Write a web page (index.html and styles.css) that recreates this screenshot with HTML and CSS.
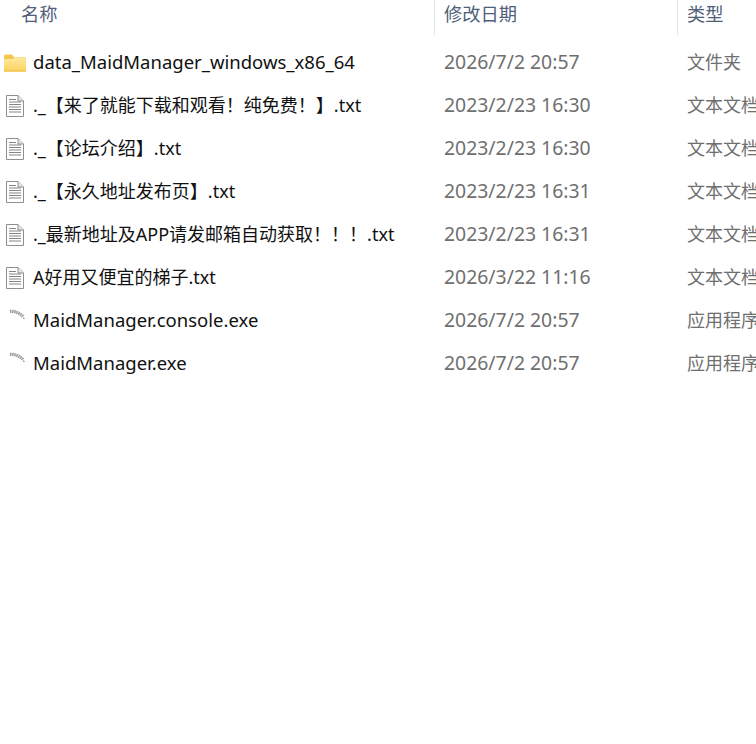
FILE: index.html
```html
<!DOCTYPE html>
<html lang="zh">
<head>
<meta charset="utf-8">
<title>文件列表</title>
<link rel="stylesheet" href="styles.css">
</head>
<body>
<svg class="sprites" width="0" height="0" aria-hidden="true">
  <defs>
    <linearGradient id="folderFill" x1="0" y1="0" x2="0" y2="1">
      <stop offset="0" stop-color="#fee9a0"/>
      <stop offset="1" stop-color="#fbd35f"/>
    </linearGradient>
    <symbol id="folder" viewBox="0 0 22 18">
      <path d="M0 2Q0 0.500 1.500 0.500H8L10 3H22V17H0Z" fill="#f3c650"/>
      <path d="M0 5H9L10.500 3.200H22V17.500H0Z" fill="url(#folderFill)"/>
      <path d="M0 17H22" stroke="#eeb93f" stroke-width="1"/>
    </symbol>
    <symbol id="doc" viewBox="0 0 18 22">
      <path d="M0.500 0.500H12L17.500 6V21.500H0.500Z" fill="#fff" stroke="#8e8e8e"/>
      <path d="M12 0.500V6H17.500" fill="#e8e8e8" stroke="#8e8e8e"/>
      <path d="M3 4.500H10M3 7H15M3 9.500H15M3 12H15M3 14.500H15M3 17H15" stroke="#858585" stroke-width="1.200"/>
    </symbol>
    <symbol id="exe" viewBox="0 0 18 14">
      <path d="M2 2.500Q9.500 1.800 15 7.500" fill="none" stroke="#d2d2d2" stroke-width="3.200"/>
      <path d="M2 2.500Q9.500 1.800 15 7.500" fill="none" stroke="#999" stroke-width="3.200" stroke-dasharray="1 1.200"/>
      <path d="M15.200 8.800L16.400 9.800" stroke="#8d8d8d" stroke-width="1.200"/>
    </symbol>
  </defs>
</svg>

<div class="list">
  <div class="head">
    <div class="hcell name-col">名称</div>
    <div class="hcell date-col">修改日期</div>
    <div class="hcell type-col">类型</div>
  </div>

  <div class="row">
    <div class="name-col name"><svg class="icon folder"><use href="#folder"/></svg><span class="latin">data_MaidManager_windows_x86_64</span></div>
    <div class="date-col meta date">2026/7/2 20:57</div>
    <div class="type-col meta">文件夹</div>
  </div>
  <div class="row">
    <div class="name-col name"><svg class="icon doc"><use href="#doc"/></svg><span>._【来了就能下载和观看！纯免费！】.txt</span></div>
    <div class="date-col meta date">2023/2/23 16:30</div>
    <div class="type-col meta">文本文档</div>
  </div>
  <div class="row">
    <div class="name-col name"><svg class="icon doc"><use href="#doc"/></svg><span>._【论坛介绍】.txt</span></div>
    <div class="date-col meta date">2023/2/23 16:30</div>
    <div class="type-col meta">文本文档</div>
  </div>
  <div class="row">
    <div class="name-col name"><svg class="icon doc"><use href="#doc"/></svg><span>._【永久地址发布页】.txt</span></div>
    <div class="date-col meta date">2023/2/23 16:31</div>
    <div class="type-col meta">文本文档</div>
  </div>
  <div class="row">
    <div class="name-col name"><svg class="icon doc"><use href="#doc"/></svg><span>._最新地址及APP请发邮箱自动获取！！！.txt</span></div>
    <div class="date-col meta date">2023/2/23 16:31</div>
    <div class="type-col meta">文本文档</div>
  </div>
  <div class="row">
    <div class="name-col name"><svg class="icon doc"><use href="#doc"/></svg><span>A好用又便宜的梯子.txt</span></div>
    <div class="date-col meta date">2026/3/22 11:16</div>
    <div class="type-col meta">文本文档</div>
  </div>
  <div class="row">
    <div class="name-col name"><svg class="icon exe"><use href="#exe"/></svg><span class="latin">MaidManager.console.exe</span></div>
    <div class="date-col meta date">2026/7/2 20:57</div>
    <div class="type-col meta">应用程序</div>
  </div>
  <div class="row">
    <div class="name-col name"><svg class="icon exe"><use href="#exe"/></svg><span class="latin">MaidManager.exe</span></div>
    <div class="date-col meta date">2026/7/2 20:57</div>
    <div class="type-col meta">应用程序</div>
  </div>
</div>
</body>
</html>
```
FILE: styles.css
```css
html, body {
  margin: 0;
  padding: 0;
  background: #fff;
}
body {
  width: 756px;
  height: 744px;
  overflow: hidden;
  font-family: "Noto Sans", "Noto Sans CJK SC", sans-serif;
  font-size: 18px;
}
.sprites {
  display: block;
}
.list {
  display: flex;
  flex-direction: column;
}
.head {
  display: grid;
  grid-template-columns: 434px 243px 79px;
  height: 35px;
  margin-bottom: 6px;
}
.row {
  display: grid;
  grid-template-columns: 434px 243px 79px;
  height: 43px;
  align-items: center;
}
.hcell {
  color: #4f6078;
  font-size: 18.25px;
  line-height: 27px;
  white-space: nowrap;
}
.head .name-col {
  padding-left: 21px;
}
.head .date-col,
.head .type-col {
  border-left: 1px solid #e5e5e5;
  padding-left: 9px;
  height: 35px;
}
.name {
  display: flex;
  align-items: center;
  white-space: nowrap;
  color: #111;
  line-height: 26px;
}
.name span {
  padding-bottom: 2px;
}
.name .latin {
  font-size: 18.5px;
}
.icon {
  flex: none;
}
.folder {
  width: 22px;
  height: 18px;
  margin-left: 4px;
  margin-right: 7px;
}
.doc {
  width: 18px;
  height: 22px;
  margin-left: 6px;
  margin-right: 9px;
}
.exe {
  width: 18px;
  height: 14px;
  margin-left: 8px;
  margin-right: 7px;
  align-self: flex-start;
  margin-top: 2px;
}
.meta {
  color: #6f6f6f;
  white-space: nowrap;
  padding-left: 10px;
  line-height: 26px;
  padding-bottom: 2px;
}
.date {
  font-size: 19.4px;
}
```
